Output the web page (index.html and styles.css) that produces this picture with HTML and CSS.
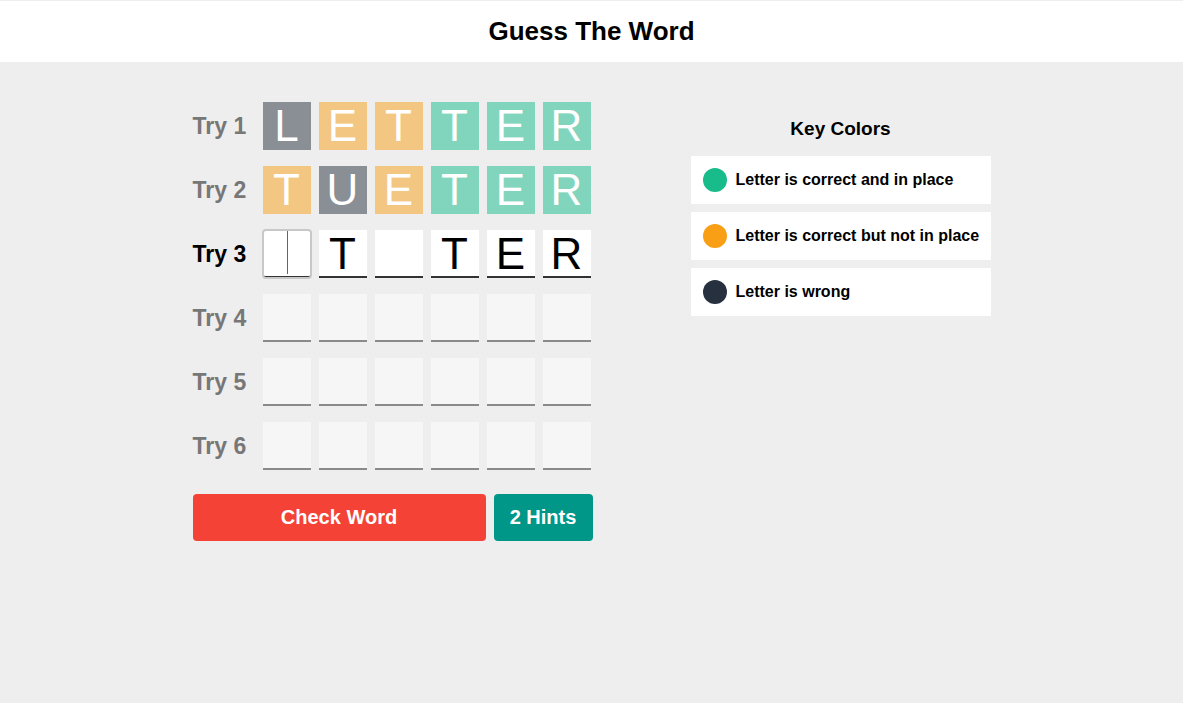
FILE: index.html
```html
<!DOCTYPE html>
<html>
<head>
<meta charset="utf-8">
<title>Guess The Word</title>
<link rel="stylesheet" href="styles.css">
</head>
<body>
<header class="header"><h1 class="title">Guess The Word</h1></header>
<main class="main">
  <section class="game">
    <div class="row">
      <span class="label">Try 1</span>
      <div class="tiles">
        <span class="tile wrong">L</span><span class="tile near">E</span><span class="tile near">T</span><span class="tile right">T</span><span class="tile right">E</span><span class="tile right">R</span>
      </div>
    </div>
    <div class="row">
      <span class="label">Try 2</span>
      <div class="tiles">
        <span class="tile near">T</span><span class="tile wrong">U</span><span class="tile near">E</span><span class="tile right">T</span><span class="tile right">E</span><span class="tile right">R</span>
      </div>
    </div>
    <div class="row active">
      <span class="label">Try 3</span>
      <div class="tiles">
        <span class="tile current focused"><span class="caret"></span></span><span class="tile current">T</span><span class="tile current"></span><span class="tile current">T</span><span class="tile current">E</span><span class="tile current">R</span>
      </div>
    </div>
    <div class="row">
      <span class="label">Try 4</span>
      <div class="tiles">
        <span class="tile empty"></span><span class="tile empty"></span><span class="tile empty"></span><span class="tile empty"></span><span class="tile empty"></span><span class="tile empty"></span>
      </div>
    </div>
    <div class="row">
      <span class="label">Try 5</span>
      <div class="tiles">
        <span class="tile empty"></span><span class="tile empty"></span><span class="tile empty"></span><span class="tile empty"></span><span class="tile empty"></span><span class="tile empty"></span>
      </div>
    </div>
    <div class="row">
      <span class="label">Try 6</span>
      <div class="tiles">
        <span class="tile empty"></span><span class="tile empty"></span><span class="tile empty"></span><span class="tile empty"></span><span class="tile empty"></span><span class="tile empty"></span>
      </div>
    </div>
    <div class="controls">
      <button class="btn check">Check Word</button>
      <button class="btn hints">2 Hints</button>
    </div>
  </section>
  <aside class="key">
    <h2 class="key-title">Key Colors</h2>
    <div class="key-item"><span class="dot dot-right"></span><span>Letter is correct and in place</span></div>
    <div class="key-item"><span class="dot dot-near"></span><span>Letter is correct but not in place</span></div>
    <div class="key-item"><span class="dot dot-wrong"></span><span>Letter is wrong</span></div>
  </aside>
</main>
</body>
</html>
```

FILE: styles.css
```css
* { box-sizing: border-box; }
html, body { margin: 0; padding: 0; }
body {
  background: #eeeeee;
  font-family: "Liberation Sans", Arial, sans-serif;
  padding-top: 1px;
  min-height: 703px;
}
.header {
  background: #ffffff;
  height: 61px;
  display: flex;
  align-items: center;
  justify-content: center;
}
.title {
  margin: 0;
  font-size: 26px;
  font-weight: bold;
  color: #000;
}
.main {
  width: 798px;
  margin: 0 auto;
  padding-top: 40px;
  display: flex;
  justify-content: space-between;
  align-items: flex-start;
}
.game {
  width: 400px;
  display: flex;
  flex-direction: column;
  gap: 16px;
}
.row {
  display: flex;
  align-items: center;
  gap: 8px;
}
.label {
  width: 62px;
  font-size: 23px;
  font-weight: bold;
  color: #777777;
}
.row.active .label { color: #000; }
.tiles {
  display: flex;
  gap: 8px;
}
.tile {
  width: 48px;
  height: 48px;
  display: flex;
  align-items: center;
  justify-content: center;
  font-size: 44px;
  color: #fff;
  position: relative;
}
.wrong { background: #8a8e95; }
.near { background: #f3c682; }
.right { background: #82d5bd; }
.current {
  background: #fff;
  color: #000;
  border-bottom: 2px solid #333;
  padding-top: 2px;
}
.empty {
  background: #f6f6f6;
  border-bottom: 2px solid #8a8a8a;
}
.focused {
  outline: 2px solid #c8c8c8;
  outline-offset: -1px;
  border-radius: 3px;
}
.caret {
  position: absolute;
  left: 24px;
  top: 1px;
  width: 1px;
  height: 43px;
  background: #ee2a24;
}
.controls {
  display: flex;
  gap: 8px;
  margin-top: 8px;
}
.btn {
  height: 47px;
  border: none;
  border-radius: 4px;
  font-family: "Liberation Sans", Arial, sans-serif;
  font-size: 20px;
  font-weight: bold;
  color: #fff;
}
.check {
  flex: 1;
  background: #f44336;
}
.hints {
  width: 99px;
  background: #009688;
}
.key {
  width: 300px;
  padding-top: 16px;
  display: flex;
  flex-direction: column;
  gap: 8px;
}
.key-title {
  margin: 0 0 8px;
  text-align: center;
  font-size: 19px;
  font-weight: bold;
  color: #000;
}
.key-item {
  height: 48px;
  background: #fff;
  display: flex;
  align-items: center;
  gap: 9px;
  padding-left: 12px;
  font-size: 16px;
  font-weight: bold;
  color: #000;
}
.dot {
  width: 24px;
  height: 24px;
  border-radius: 50%;
  flex: none;
}
.dot-right { background: #18bc8a; }
.dot-near { background: #f89f15; }
.dot-wrong { background: #27303f; }
```
